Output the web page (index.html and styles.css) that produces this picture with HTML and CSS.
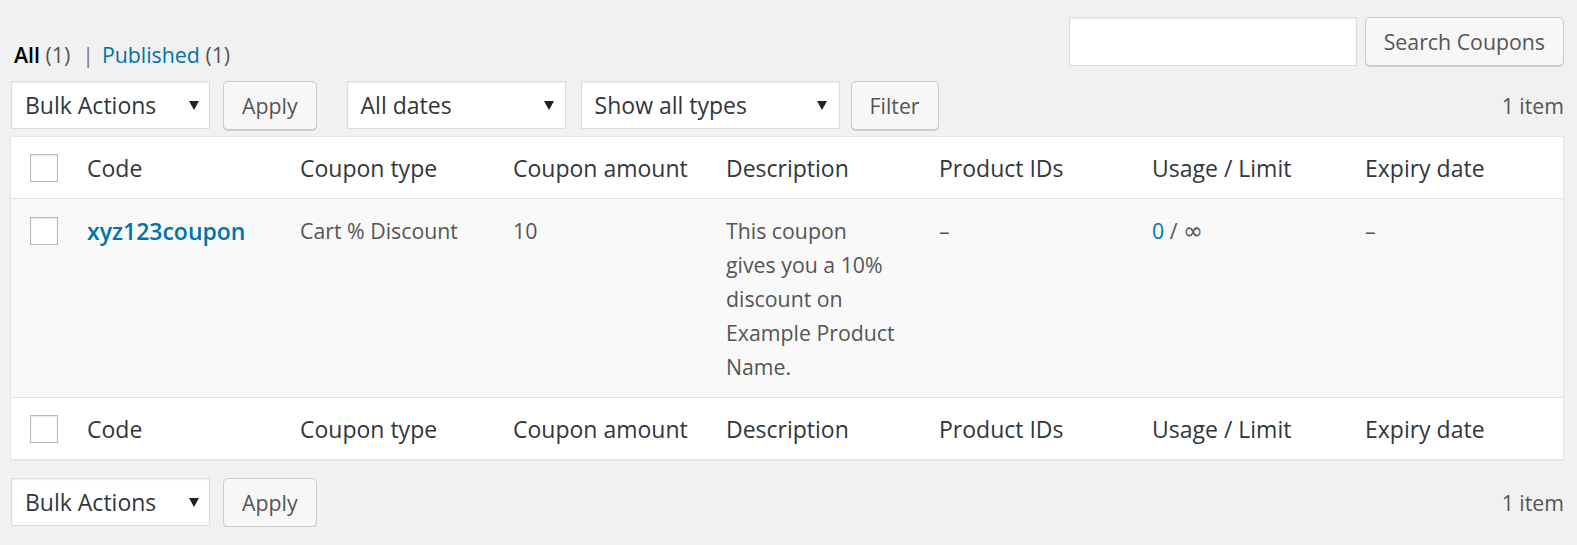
FILE: index.html
```html
<!DOCTYPE html>
<html lang="en">
<head>
<meta charset="utf-8">
<title>Coupons</title>
<link rel="stylesheet" href="styles.css">
</head>
<body>
<div class="wrap">
  <div class="top">
    <ul class="subsubsub">
      <li><span class="current">All</span> <span class="count">(1)</span></li>
      <li class="sep">|</li>
      <li><a href="#" class="link">Published</a> <span class="count">(1)</span></li>
    </ul>
    <div class="search-box">
      <input type="search" class="search-input" aria-label="Search Coupons">
      <button class="button" type="button">Search Coupons</button>
    </div>
  </div>

  <div class="tablenav">
    <div class="actions">
      <div class="select select-bulk"><span>Bulk Actions</span><svg class="arrow" viewBox="0 0 10 9" width="10" height="9"><polygon points="0,0 10,0 5,9"/></svg></div>
      <button class="button" type="button">Apply</button>
    </div>
    <div class="actions filters">
      <div class="select select-dates"><span>All dates</span><svg class="arrow" viewBox="0 0 10 9" width="10" height="9"><polygon points="0,0 10,0 5,9"/></svg></div>
      <div class="select select-types"><span>Show all types</span><svg class="arrow" viewBox="0 0 10 9" width="10" height="9"><polygon points="0,0 10,0 5,9"/></svg></div>
      <button class="button" type="button">Filter</button>
    </div>
    <div class="displaying-num">1 item</div>
  </div>

  <table class="widefat">
    <colgroup>
      <col class="col-check">
      <col><col><col><col><col><col><col>
    </colgroup>
    <thead>
      <tr>
        <th class="check"><span class="checkbox"></span></th>
        <th>Code</th>
        <th>Coupon type</th>
        <th>Coupon amount</th>
        <th>Description</th>
        <th>Product IDs</th>
        <th>Usage / Limit</th>
        <th>Expiry date</th>
      </tr>
    </thead>
    <tbody>
      <tr>
        <td class="check"><span class="checkbox"></span></td>
        <td><a href="#" class="code-link">xyz123coupon</a></td>
        <td>Cart % Discount</td>
        <td>10</td>
        <td>This coupon<br>gives you a 10%<br>discount on<br>Example Product<br>Name.</td>
        <td>–</td>
        <td><a href="#" class="link">0</a> / <span class="inf">∞</span></td>
        <td>–</td>
      </tr>
    </tbody>
    <tfoot>
      <tr>
        <th class="check"><span class="checkbox"></span></th>
        <th>Code</th>
        <th>Coupon type</th>
        <th>Coupon amount</th>
        <th>Description</th>
        <th>Product IDs</th>
        <th>Usage / Limit</th>
        <th>Expiry date</th>
      </tr>
    </tfoot>
  </table>

  <div class="tablenav tablenav-bottom">
    <div class="actions">
      <div class="select select-bulk"><span>Bulk Actions</span><svg class="arrow" viewBox="0 0 10 9" width="10" height="9"><polygon points="0,0 10,0 5,9"/></svg></div>
      <button class="button" type="button">Apply</button>
    </div>
    <div class="displaying-num">1 item</div>
  </div>
</div>
</body>
</html>
```

FILE: styles.css
```css
* { box-sizing: border-box; }

html, body {
  margin: 0;
  padding: 0;
  background: #f1f1f1;
}

body {
  font-family: "Open Sans", "Noto Sans", "DejaVu Sans", sans-serif;
  color: #444;
  font-size: 21.3px;
}

.wrap {
  padding: 0 13px 0 10px;
}

/* top row */
.top {
  display: flex;
  justify-content: space-between;
  align-items: flex-start;
  padding-top: 17px;
}

.subsubsub {
  list-style: none;
  margin: 21px 0 0 4px;
  padding: 0;
  display: flex;
  line-height: 34px;
  font-size: 21.3px;
  color: #555;
}

.subsubsub li {
  white-space: pre;
}

.subsubsub .current {
  color: #000;
  font-weight: 600;
}

.subsubsub .sep {
  color: #777;
  margin: 0 8px 0 12px;
}

.link {
  color: #0073aa;
  text-decoration: none;
}

.search-box {
  display: flex;
  gap: 8px;
}

.search-input {
  width: 288px;
  height: 49px;
  margin: 0;
  border: 1px solid #ddd;
  background: #fff;
  box-shadow: inset 0 1px 2px rgba(0,0,0,.07);
  font: inherit;
  outline: none;
}

/* buttons */
.button {
  height: 49px;
  padding: 0 18px;
  margin: 0;
  font-family: inherit;
  font-size: 21.3px;
  color: #555;
  background: #f7f7f7;
  border: 1px solid #ccc;
  border-radius: 5px;
  box-shadow: 0 1px 0 #ccc;
  line-height: 46px;
  white-space: nowrap;
}

/* tablenav */
.tablenav {
  display: flex;
  align-items: center;
  height: 49px;
  margin-top: 9px;
}

.tablenav-bottom {
  margin-top: 18px;
}

.actions {
  display: flex;
  align-items: flex-start;
  gap: 13px;
  margin-left: 1px;
}

.filters {
  margin-left: 30px;
  gap: 15px;
}

.filters .button {
  margin-left: -4px;
}

.select {
  height: 48px;
  display: flex;
  align-items: center;
  justify-content: space-between;
  padding: 0 11px 0 13px;
  background: #fff;
  border: 1px solid #ddd;
  box-shadow: inset 0 1px 2px rgba(0,0,0,.07);
  font-size: 23px;
  color: #32373c;
  white-space: nowrap;
}

.select-bulk { width: 199px; padding-right: 10px; }
.select-dates { width: 219px; }
.select-types { width: 259px; padding-right: 12px; }

.arrow {
  fill: #222;
  flex: none;
}

.displaying-num {
  margin-left: auto;
  font-size: 21.3px;
  color: #555;
}

/* table */
.widefat {
  width: 100%;
  margin-top: 6px;
  table-layout: fixed;
  border-collapse: separate;
  border-spacing: 0;
  background: #fff;
  border: 1px solid #e5e5e5;
  box-shadow: 0 1px 1px rgba(0,0,0,.04);
}

.col-check { width: 61px; }

.widefat th {
  text-align: left;
  font-weight: normal;
  font-size: 23px;
  line-height: 34px;
  color: #32373c;
  padding: 14px 10px 13px 15px;
  vertical-align: middle;
  white-space: nowrap;
}

.widefat thead th {
  border-bottom: 1px solid #e1e1e1;
}

.widefat tfoot th {
  border-top: 1px solid #e1e1e1;
}

.widefat tbody tr {
  background: #f9f9f9;
}

.widefat td {
  font-size: 21.3px;
  line-height: 34px;
  color: #555;
  padding: 15px 10px 13px 15px;
  vertical-align: top;
}

.widefat th.check,
.widefat td.check {
  padding-left: 19px;
  padding-right: 0;
}

.widefat td.check {
  padding-top: 18px;
}

.checkbox {
  display: block;
  width: 28px;
  height: 28px;
  background: #fff;
  border: 1px solid #b4b9be;
  box-shadow: inset 0 1px 2px rgba(0,0,0,.1);
}

.code-link {
  color: #0073aa;
  font-weight: 600;
  font-size: 23px;
  text-decoration: none;
}

.inf {
  font-family: "DejaVu Sans", sans-serif;
  font-size: 24px;
  line-height: 1;
}
```
